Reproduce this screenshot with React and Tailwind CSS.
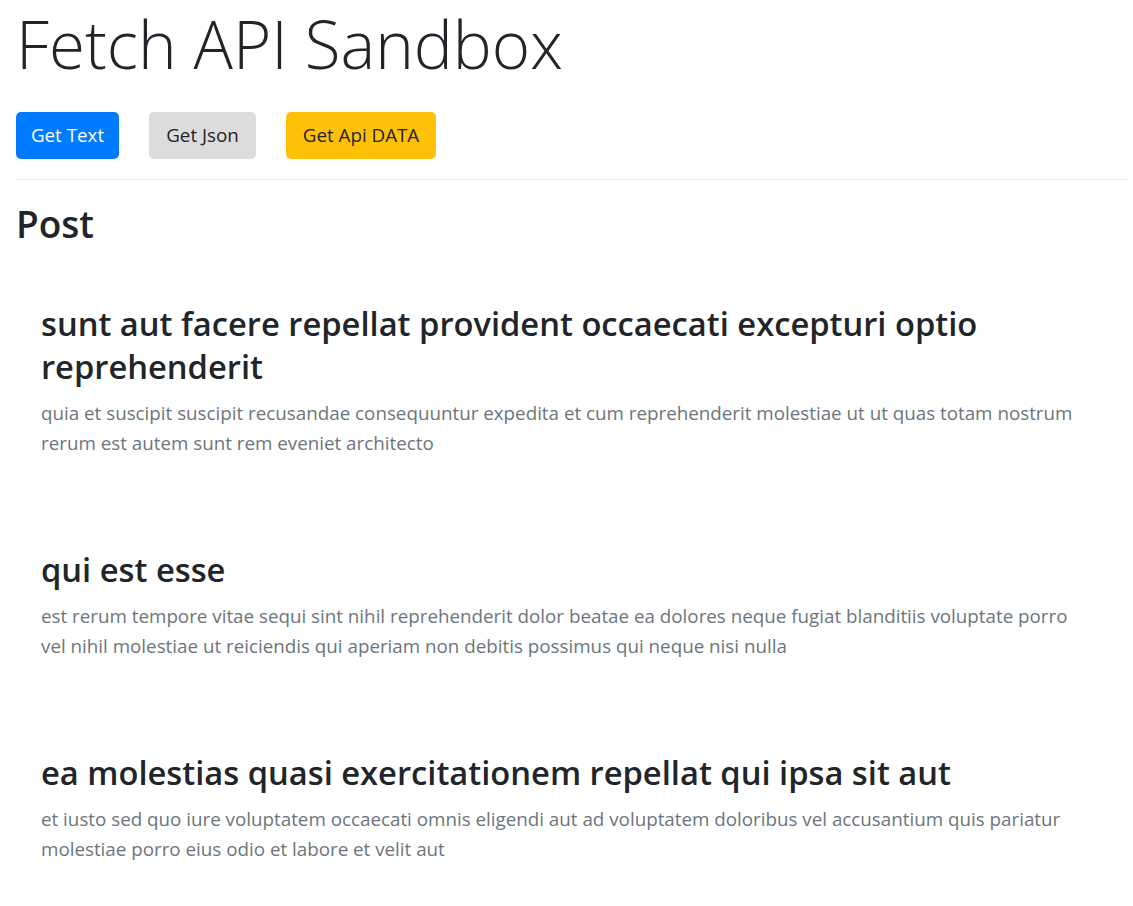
import React from "react";

const posts = [
  {
    title: "sunt aut facere repellat provident occaecati excepturi optio reprehenderit",
    body: "quia et suscipit suscipit recusandae consequuntur expedita et cum reprehenderit molestiae ut ut quas totam nostrum rerum est autem sunt rem eveniet architecto",
  },
  {
    title: "qui est esse",
    body: "est rerum tempore vitae sequi sint nihil reprehenderit dolor beatae ea dolores neque fugiat blanditiis voluptate porro vel nihil molestiae ut reiciendis qui aperiam non debitis possimus qui neque nisi nulla",
  },
  {
    title: "ea molestias quasi exercitationem repellat qui ipsa sit aut",
    body: "et iusto sed quo iure voluptatem occaecati omnis eligendi aut ad voluptatem doloribus vel accusantium quis pariatur molestiae porro eius odio et labore et velit aut",
  },
];

export default function App() {
  return (
    <div
      className="bg-white text-[#212529] pl-4 pr-[6px] min-h-[906px]"
      style={{ fontFamily: '"Open Sans", "Noto Sans", sans-serif' }}
    >
      <h1 className="text-[65.5px] font-light leading-[84px] m-0 pt-[2px]">Fetch API Sandbox</h1>
      <div className="flex gap-[30px] mt-[26px]">
        <button className="bg-[#007bff] text-white text-[18.8px] h-[47px] w-[103px] text-center rounded-[5px]">
          Get Text
        </button>
        <button className="bg-[#dcdcdc] text-[#212529] text-[18.8px] h-[47px] w-[107px] text-center rounded-[5px]">
          Get Json
        </button>
        <button className="bg-[#ffc107] text-[#212529] text-[18.8px] h-[47px] w-[150px] text-center rounded-[5px]">
          Get Api DATA
        </button>
      </div>
      <hr className="mt-[20px] mb-[20px] border-0 border-t border-[#e5e5e5]" />
      <h2 className="text-[37px] font-semibold leading-[48px] mb-[10px]">Post</h2>
      <div className="flex flex-col mt-[29px]">
        {posts.map((p, i) => (
          <div key={i} className="pl-[25px] pr-[42px] py-[25px] mb-[20px]">
            <h3 className="text-[32.7px] font-semibold leading-[43px] mb-[10px]">{p.title}</h3>
            <p className="text-[18.8px] leading-[30px] text-[#6c757d] mb-[20px]">{p.body}</p>
          </div>
        ))}
      </div>
    </div>
  );
}
